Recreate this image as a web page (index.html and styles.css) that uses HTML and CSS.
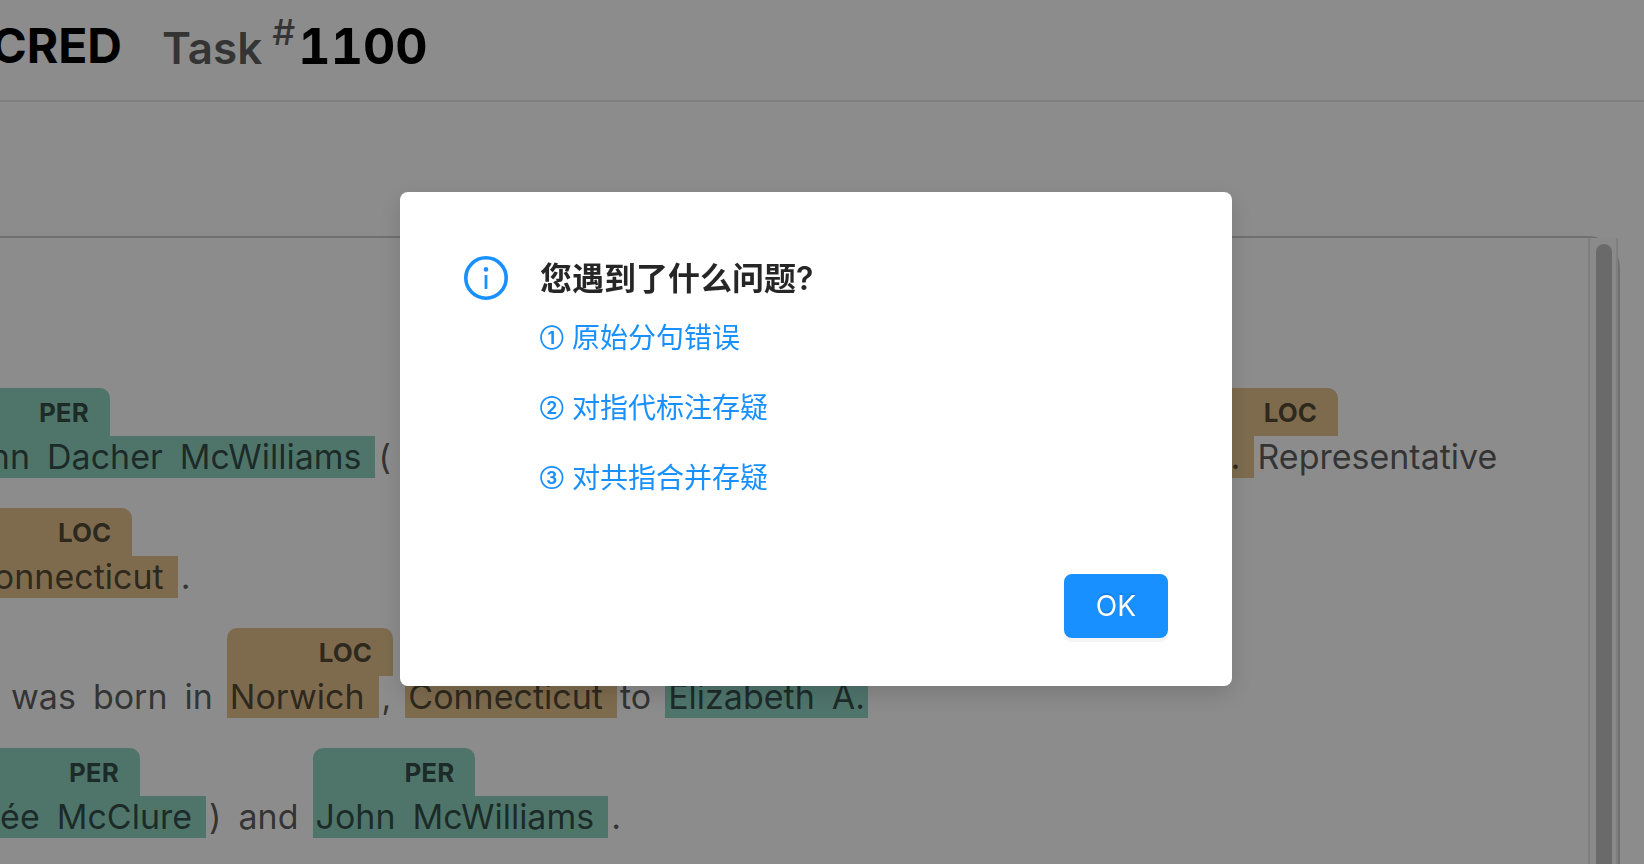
FILE: index.html
```html
<!DOCTYPE html>
<html lang="zh-CN">
<head>
<meta charset="utf-8">
<title>CRED Task #1100</title>
<link rel="stylesheet" href="styles.css">
</head>
<body>
<div class="page">
  <header class="header">
    <div class="brand"><span>CRED</span></div>
    <h1 class="task"><span class="task-label">Task</span><span class="task-hash">#</span><span class="task-number">1100</span></h1>
  </header>
  <main class="panel">
    <div class="document">
      <p class="line line-name">
        <span class="mention per"><span class="tag">PER</span><span class="word">John</span><span class="word">Dacher</span><span class="word">McWilliams</span></span>
        <span class="word">(</span>
        <span class="mention loc push"><span class="tag">LOC</span><span class="word">U.S.</span></span>
        <span class="word">Representative</span>
      </p>
      <p class="line line-state">
        <span class="mention loc"><span class="tag">LOC</span><span class="word">Connecticut</span></span>
        <span class="word">.</span>
      </p>
      <p class="line line-born">
        <span class="word">was</span>
        <span class="word">born</span>
        <span class="word">in</span>
        <span class="mention loc"><span class="tag">LOC</span><span class="word">Norwich</span></span>
        <span class="word">,</span>
        <span class="mention loc"><span class="tag">LOC</span><span class="word">Connecticut</span></span>
        <span class="word">to</span>
        <span class="mention per"><span class="tag">PER</span><span class="word">Elizabeth</span><span class="word last">A.</span></span>
      </p>
      <p class="line line-parents">
        <span class="mention per"><span class="tag">PER</span><span class="word">née</span><span class="word">McClure</span></span>
        <span class="word">)</span>
        <span class="word">and</span>
        <span class="mention per"><span class="tag">PER</span><span class="word">John</span><span class="word">McWilliams</span></span>
        <span class="word">.</span>
      </p>
    </div>
    <div class="scrollbar"><div class="thumb"></div></div>
  </main>
</div>

<div class="mask">
  <section class="modal" role="dialog" aria-modal="true" aria-labelledby="modal-title">
    <div class="modal-body">
      <svg class="info-icon" viewBox="0 0 44 44" aria-hidden="true">
        <circle cx="22" cy="22" r="20.2" fill="none" stroke="currentColor" stroke-width="3.6"/>
        <circle cx="22" cy="13.4" r="2.3" fill="currentColor"/>
        <rect x="20.6" y="19" width="2.8" height="14" rx=".4" fill="currentColor"/>
      </svg>
      <div class="modal-content">
        <h2 class="modal-title" id="modal-title">您遇到了什么问题?</h2>
        <ul class="issues">
          <li><a href="#sentence"><span class="num">①</span>原始分句错误</a></li>
          <li><a href="#mention"><span class="num">②</span>对指代标注存疑</a></li>
          <li><a href="#merge"><span class="num">③</span>对共指合并存疑</a></li>
        </ul>
      </div>
    </div>
    <div class="modal-actions"><button class="ok" type="button">OK</button></div>
  </section>
</div>
</body>
</html>
```
FILE: styles.css
```css
* { box-sizing: border-box; }

body {
  margin: 0;
  overflow: hidden;
  background: #fff;
  color: rgba(0, 0, 0, .65);
  font-family: Inter, "Noto Sans CJK SC", sans-serif;
}

.page {
  display: flex;
  flex-direction: column;
  height: 100vh;
  overflow: hidden;
}

.header {
  display: flex;
  flex: none;
  height: 102px;
  padding-top: 18px;
  border-bottom: 2px solid #e8e8e8;
  font-size: 48px;
  line-height: 56px;
}

.brand {
  display: flex;
  justify-content: flex-end;
  width: 122px;
  overflow: hidden;
  color: #000;
  font-weight: 700;
}

.task {
  display: flex;
  align-items: baseline;
  margin: 0 0 0 40px;
  font-size: 48px;
  font-weight: 500;
}

.task-label {
  font-size: 44px;
  font-weight: 600;
}

.task-hash {
  align-self: flex-start;
  margin-left: 10px;
  font-size: 36px;
  line-height: 28px;
}

.task-number {
  margin-left: 3px;
  color: #000;
  font-size: 50px;
  font-weight: 700;
  font-variant-numeric: tabular-nums;
}

.panel {
  display: flex;
  flex: 1;
  min-height: 0;
  margin: 134px 24px 0 0;
  border: solid #ccc;
  border-width: 2px 2px 0 0;
  border-top-right-radius: 32px;
}

.document {
  display: flex;
  flex: 1;
  flex-direction: column;
  gap: 30px;
  min-width: 0;
  padding-top: 150px;
}

.line {
  display: flex;
  align-items: flex-end;
  flex: none;
  height: 90px;
  margin: 0;
  font-size: 34px;
  line-height: 42px;
  white-space: nowrap;
}

.line-name { margin-left: -53px; }
.line-state { margin-left: -34px; }
.line-born { margin-left: 8px; }
.line-parents { margin-left: -23px; }

.word { padding: 0 14px 0 3px; }
.word.last { padding-right: 3px; }

.mention {
  position: relative;
  display: flex;
  flex: none;
}

.push { margin-left: 767px; }

.tag {
  position: absolute;
  bottom: 100%;
  left: 0;
  height: 48px;
  padding: 0 21px 0 92px;
  border-radius: 10px 10px 0 0;
  font-size: 26px;
  font-weight: 700;
  line-height: 50px;
}

.per, .per .tag { background: #90d5c4; }
.loc, .loc .tag { background: #e5c48f; }

.scrollbar {
  flex: none;
  width: 30px;
  padding: 6px;
  border: solid #e8e8e8;
  border-width: 0 2px;
  background: #fcfcfc;
}

.thumb {
  width: 16px;
  height: 100vh;
  margin: 0 auto;
  border-radius: 8px;
  background: #c2c2c2;
}

.mask {
  position: fixed;
  inset: 0;
  padding: 192px 12px 0 0;
  background: rgba(0, 0, 0, .45);
}

.modal {
  width: 832px;
  max-width: 100%;
  margin: 0 auto;
  padding: 64px 64px 48px;
  border-radius: 8px;
  background: #fff;
  box-shadow: 0 8px 24px rgba(0, 0, 0, .15);
}

.modal-body {
  display: flex;
  align-items: flex-start;
  gap: 32px;
}

.info-icon {
  flex: none;
  width: 44px;
  height: 44px;
  color: #1890ff;
}

.modal-title {
  margin: 0 0 15px;
  color: rgba(0, 0, 0, .85);
  font-size: 32px;
  font-weight: 600;
  line-height: 46px;
}

.issues {
  display: flex;
  flex-direction: column;
  gap: 28px;
  margin: 0;
  padding: 0 0 28px;
  list-style: none;
  font-size: 28px;
  line-height: 42px;
}

.issues a {
  display: flex;
  color: #1890ff;
  text-decoration: none;
}

.num {
  width: 32px;
  font-size: 17px;
  font-weight: 700;
}

.modal-actions {
  display: flex;
  justify-content: flex-end;
  margin-top: 47px;
}

.ok {
  height: 64px;
  padding: 0 30px;
  border: 2px solid #1890ff;
  border-radius: 8px;
  background: #1890ff;
  box-shadow: 0 4px 0 rgba(0, 0, 0, .045);
  color: #fff;
  font: 400 28px/42px Inter, sans-serif;
  text-shadow: 0 -2px 0 rgba(0, 0, 0, .12);
}
```
